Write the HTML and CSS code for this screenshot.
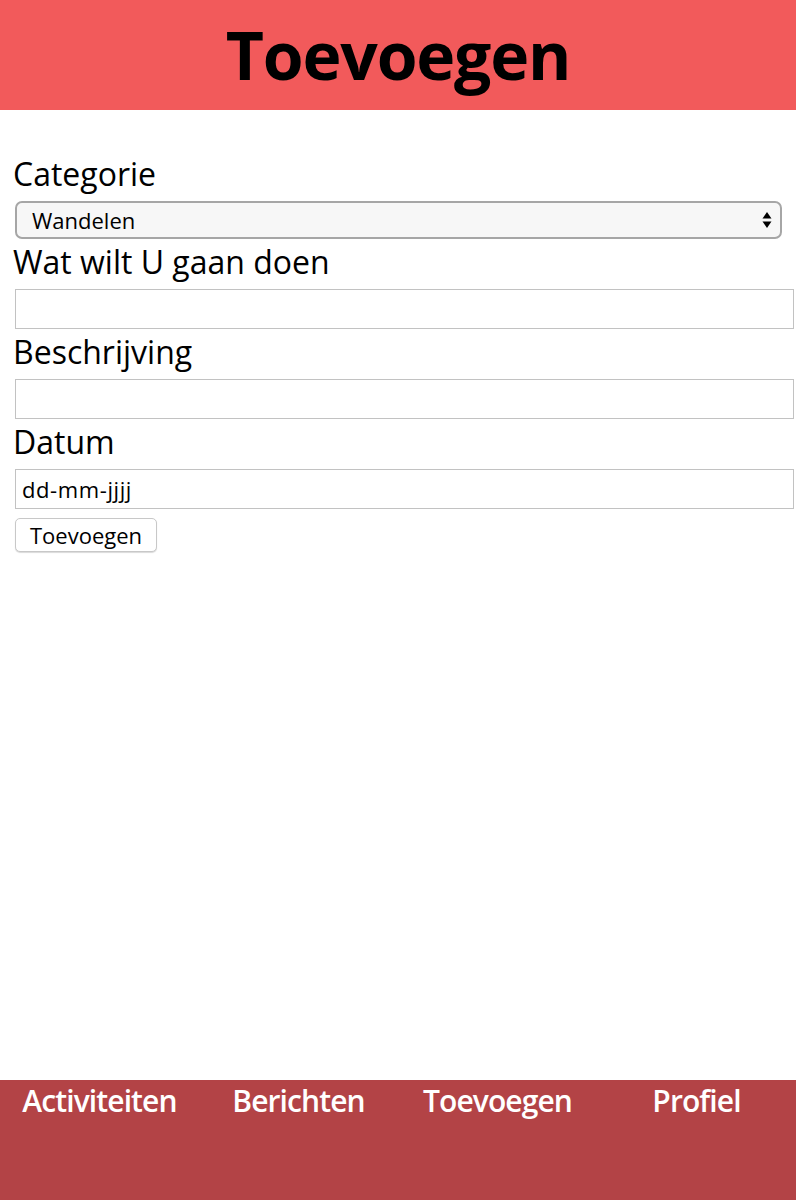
FILE: index.html
```html
<!DOCTYPE html>
<html lang="nl">
<head>
<meta charset="utf-8">
<title>Toevoegen</title>
<link rel="stylesheet" href="styles.css">
</head>
<body>
<div class="page">
  <header class="top">
    <h1 class="title">Toevoegen</h1>
  </header>
  <main class="content">
    <form class="form">
      <label class="label" for="cat">Categorie</label>
      <div class="select-wrap">
        <select id="cat" class="select">
          <option>Wandelen</option>
        </select>
        <svg class="arrows" width="10" height="22" viewBox="0 0 10 22">
          <path d="M5 3 L9.5 9.5 L0.5 9.5 Z" fill="#000"/>
          <path d="M5 19 L9.5 12.5 L0.5 12.5 Z" fill="#000"/>
        </svg>
      </div>
      <label class="label" for="wat">Wat wilt U gaan doen</label>
      <input id="wat" class="input" type="text">
      <label class="label" for="besch">Beschrijving</label>
      <input id="besch" class="input" type="text">
      <label class="label" for="datum">Datum</label>
      <input id="datum" class="input date" type="text" placeholder="dd-mm-jjjj">
      <div class="btn-row"><button type="button" class="btn">Toevoegen</button></div>
    </form>
  </main>
  <nav class="nav">
    <a class="nav-item">Activiteiten</a>
    <a class="nav-item">Berichten</a>
    <a class="nav-item">Toevoegen</a>
    <a class="nav-item">Profiel</a>
  </nav>
</div>
</body>
</html>
```

FILE: styles.css
```css
html, body {
  margin: 0;
  padding: 0;
}
body {
  font-family: "Open Sans", "DejaVu Sans", sans-serif;
  color: #000;
  background: #fff;
}
.page {
  display: flex;
  flex-direction: column;
  min-height: 1200px;
}
.top {
  background: #f25a5b;
  height: 110px;
  display: flex;
  justify-content: center;
  align-items: center;
}
.title {
  margin: 0;
  font-size: 66px;
  font-weight: 700;
  line-height: 1;
  letter-spacing: -1.2px;
  padding-bottom: 2px;
}
.content {
  flex: 1;
  padding: 41px 3px 0 15px;
}
.form {
  display: flex;
  flex-direction: column;
  align-items: flex-start;
}
.label {
  display: block;
  font-size: 32px;
  line-height: 46px;
  padding-bottom: 4px;
  margin-left: -2px;
}
.select-wrap {
  position: relative;
  width: 767px;
}
.select {
  appearance: none;
  -webkit-appearance: none;
  width: 767px;
  height: 38px;
  box-sizing: border-box;
  border: 2px solid #a6a6a6;
  border-radius: 7px;
  background: #f7f7f7;
  font-family: "Open Sans", sans-serif;
  font-size: 22px;
  color: #000;
  padding: 0 0 0 15px;
  margin: 0;
  display: block;
}
.arrows {
  position: absolute;
  right: 10px;
  top: 8px;
}
.input {
  width: 779px;
  height: 40px;
  box-sizing: border-box;
  border: 1px solid #c2c2c2;
  border-radius: 0;
  margin: 0;
  padding: 0 6px;
  font-family: "Open Sans", sans-serif;
  font-size: 22px;
  background: #fff;
}
.date::placeholder {
  color: #000;
  opacity: 1;
  letter-spacing: 0.6px;
}
.btn-row {
  padding-top: 9px;
}
.btn {
  width: 142px;
  height: 34px;
  box-sizing: border-box;
  border: 1px solid #c8c8c8;
  border-radius: 5px;
  background: #fff;
  font-family: "Open Sans", sans-serif;
  font-size: 22px;
  line-height: 30px;
  color: #000;
  padding: 0;
  box-shadow: 0 1px 1px rgba(0,0,0,0.15);
}
.nav {
  height: 120px;
  background: #b34346;
  display: grid;
  grid-template-columns: repeat(4, 1fr);
  align-items: start;
}
.nav-item {
  color: #fff;
  text-align: center;
  font-size: 30px;
  font-weight: 600;
  letter-spacing: -0.9px;
  line-height: 42px;
}
```
